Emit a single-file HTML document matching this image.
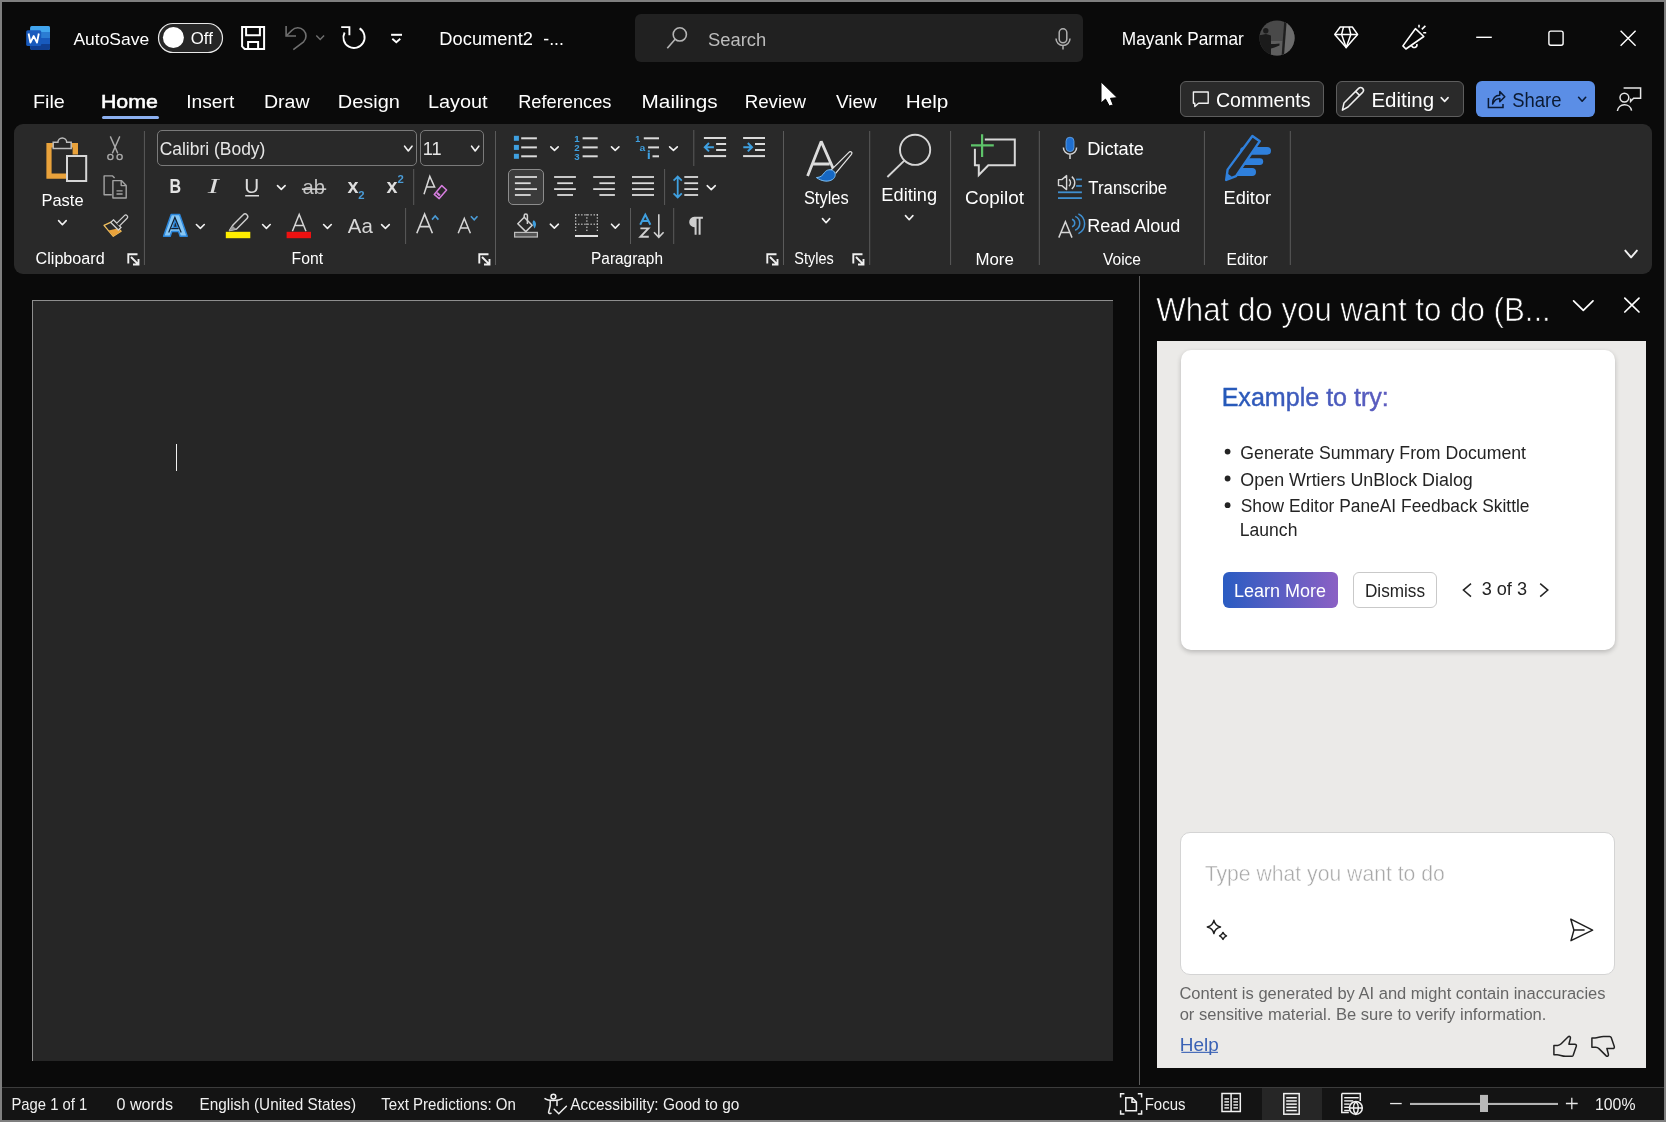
<!DOCTYPE html>
<html><head><meta charset="utf-8">
<style>
*{margin:0;padding:0;box-sizing:border-box}
html,body{width:1666px;height:1122px;overflow:hidden;background:#7f7f7f}
body{position:relative;font-family:"Liberation Sans",sans-serif}
.a{position:absolute}
#ov{position:absolute;left:0;top:0;width:1666px;height:1122px;font-family:"Liberation Sans",sans-serif;will-change:transform}
</style></head><body>
<div class="a" style="left:2px;top:2px;width:1662px;height:1118px;background:#0a0a0a"></div>
<!-- search box -->
<div class="a" style="left:635px;top:14px;width:448px;height:48px;background:#212121;border-radius:6px"></div>
<!-- toolbar buttons -->
<div class="a" style="left:1180px;top:81px;width:144px;height:36px;background:#2a2a2a;border:1px solid #5e5e5e;border-radius:6px"></div>
<div class="a" style="left:1336px;top:81px;width:128px;height:36px;background:#2a2a2a;border:1px solid #5e5e5e;border-radius:6px"></div>
<div class="a" style="left:1476px;top:81px;width:119px;height:36px;background:#5b8ee6;border-radius:6px"></div>
<!-- ribbon panel -->
<div class="a" style="left:14px;top:124px;width:1638px;height:150px;background:#292929;border-radius:9px"></div>
<!-- font combos -->
<div class="a" style="left:157px;top:130px;width:260px;height:36px;background:#292929;border:1px solid #7a7a7a;border-radius:5px"></div>
<div class="a" style="left:420px;top:130px;width:64px;height:36px;background:#292929;border:1px solid #7a7a7a;border-radius:5px"></div>
<!-- align left selected -->
<div class="a" style="left:508px;top:169px;width:36px;height:36px;background:#3b3b3b;border:1px solid #8c8c8c;border-radius:5px"></div>
<!-- page -->
<div class="a" style="left:32px;top:300px;width:1081px;height:761px;background:#262626;border-top:1px solid #8e8e8e;border-left:1px solid #8e8e8e"></div>
<div class="a" style="left:176px;top:444px;width:1px;height:27px;background:#f0f0f0"></div>
<!-- pane separator -->
<div class="a" style="left:1139px;top:276px;width:1px;height:809px;background:#5c5c5c"></div>
<!-- pane light area -->
<div class="a" style="left:1157px;top:341px;width:489px;height:727px;background:#ebeae8"></div>
<!-- card -->
<div class="a" style="left:1181px;top:350px;width:434px;height:300px;background:#fff;border-radius:10px;box-shadow:0 2px 5px rgba(0,0,0,.22)"></div>
<div class="a" style="left:1223px;top:572px;width:115px;height:36px;background:linear-gradient(90deg,#2a5cc2,#8b60c4);border-radius:6px"></div>
<div class="a" style="left:1353px;top:572px;width:84px;height:36px;background:#fff;border:1px solid #c9c9c9;border-radius:6px"></div>
<!-- input box -->
<div class="a" style="left:1180px;top:832px;width:435px;height:143px;background:#fff;border:1px solid #d4d4d4;border-radius:10px"></div>
<!-- status bar -->
<div class="a" style="left:2px;top:1087px;width:1662px;height:1px;background:#3c3c3c"></div>
<div class="a" style="left:2px;top:1088px;width:1662px;height:32px;background:#141414"></div>
<div class="a" style="left:1262px;top:1088px;width:60px;height:32px;background:#262626"></div>
<svg id="ov" width="1666" height="1122" viewBox="0 0 1666 1122">
<defs><linearGradient id="exg" gradientUnits="userSpaceOnUse" x1="1223" y1="0" x2="1387" y2="0"><stop offset="0" stop-color="#2459b9"/><stop offset="1" stop-color="#5d5cbf"/></linearGradient></defs>
<!-- word logo -->
<rect x="30.2" y="26" width="19.8" height="24" rx="2" fill="#2b7cd3"/>
<path d="M32.2,26 H48 a2,2 0 0 1 2,2 V32 H30.2 V28 a2,2 0 0 1 2,-2z" fill="#41a5ee"/>
<rect x="30.2" y="38" width="19.8" height="6" fill="#185abd"/>
<path d="M30.2,44 H50 V48 a2,2 0 0 1 -2,2 H32.2 a2,2 0 0 1 -2,-2z" fill="#103f91"/>
<rect x="26.2" y="30.2" width="15" height="15.8" rx="1.5" fill="#185abd"/>
<path d="M28.6,33.5 L30.4,42.6 L33.7,36 L37,42.6 L38.8,33.5" fill="none" stroke="#fff" stroke-width="1.8" stroke-linejoin="round"/>
<!-- toggle -->
<rect x="158.5" y="23.5" width="64" height="29" rx="14.5" fill="#262626" stroke="#e8e8e8" stroke-width="1.2"/>
<circle cx="173.4" cy="37.5" r="10.5" fill="#fff"/>
<!-- save -->
<path d="M242.1,27 H264.1 V48.9 H244.6 L242.1,46.4Z" fill="none" stroke="#fff" stroke-width="2"/>
<path d="M246.1,27 V35.2 H259.9 V27" fill="none" stroke="#fff" stroke-width="2"/>
<path d="M248.1,48.9 V42 H258.1 V48.9" fill="none" stroke="#fff" stroke-width="2"/>
<!-- undo -->
<g fill="none" stroke="#707070" stroke-width="1.6">
<path d="M286.1,26 V36 H296"/>
<path d="M286.6,35.5 L292,30.2 A8.2,8.2 0 0 1 303.6,41.8 L293.3,49.6"/>
<path d="M316.3,35.5 L320.2,39.4 L324.1,35.5" stroke-width="1.4"/>
</g>
<!-- redo -->
<g fill="none" stroke="#fff" stroke-width="1.9">
<path d="M359.6,28.4 A10.6,10.6 0 1 1 344.6,32.5"/>
<path d="M341.2,27.1 H349.4 V35.2"/>
</g>
<!-- customize -->
<path d="M391.1,34.8 H402" stroke="#fff" stroke-width="2"/>
<path d="M392.3,38.8 L396.3,42.3 L400.3,38.8" fill="none" stroke="#fff" stroke-width="1.8"/>
<!-- search icon -->
<g fill="none" stroke="#b5b5b5" stroke-width="1.6">
<circle cx="679.8" cy="34.4" r="6.6"/>
<path d="M675.1,39.2 L667.3,48.3"/>
</g>
<!-- mic -->
<g fill="none" stroke="#b0b0b0" stroke-width="1.5">
<rect x="1059.2" y="28.8" width="7.6" height="14" rx="3.8"/>
<path d="M1056,38.5 a7,7 0 0 0 14,0 M1063,45.5 V49.5"/>
</g>
<!-- avatar -->
<defs><clipPath id="av"><circle cx="1277" cy="38" r="17.6"/></clipPath></defs>
<g clip-path="url(#av)">
<rect x="1258" y="20" width="38" height="37" fill="#494949"/>
<path d="M1285.5,20 L1296,20 L1296,57 L1282.5,57Z" fill="#6b6b6b"/>
<rect x="1271" y="41" width="11.5" height="16" fill="#5e5e5e"/>
<path d="M1284.2,22 L1286.6,22 L1283.9,57 L1281.5,57Z" fill="#1f1f1f"/>
<path d="M1261,35 L1266,34 L1271,35.5 L1271,44 L1275,44 L1279.5,43.4 L1279.5,45.6 L1274.5,47.5 L1271,48.4 L1271,57 L1259,57 L1259,35Z" fill="#1b1b1b"/>
<circle cx="1265.8" cy="30.8" r="2.7" fill="#1b1b1b"/>
</g>
<!-- diamond -->
<g fill="none" stroke="#fff" stroke-width="1.5" stroke-linejoin="round">
<path d="M1340.2,27 H1352.3 L1357.6,34.4 L1346.2,47.6 L1334.8,34.4Z"/>
<path d="M1334.8,34.4 H1357.6 M1343.5,27 L1341.6,34.4 L1346.2,47.6 L1350.8,34.4 L1349,27"/>
</g>
<!-- megaphone -->
<g fill="none" stroke="#fff" stroke-width="1.6" stroke-linejoin="round">
<path d="M1402.9,45.9 L1415.4,28.7 L1423.8,36.5 L1405.9,49Z"/>
<path d="M1411.6,45.6 a2.7,2.7 0 0 0 5.2,-1.6"/>
<path d="M1419,24.8 V27.4 M1421.8,29.4 L1425.4,25.9 M1423.2,32.8 H1426.2"/>
</g>
<!-- window controls -->
<path d="M1476.2,37.3 H1491.8" stroke="#fff" stroke-width="1.4"/>
<rect x="1548.9" y="31.1" width="14.2" height="14.2" rx="2" fill="none" stroke="#fff" stroke-width="1.4"/>
<path d="M1620.6,30.7 L1635.6,45.7 M1635.6,30.7 L1620.6,45.7" stroke="#fff" stroke-width="1.4"/>
<!-- home underline -->
<rect x="102" y="116" width="57" height="3" rx="1.5" fill="#8cb0f0"/>

<rect x="143.90" y="131" width="1" height="134" fill="#5a5a5a"/>
<rect x="495.00" y="131" width="1" height="134" fill="#5a5a5a"/>
<rect x="783.00" y="131" width="1" height="134" fill="#5a5a5a"/>
<rect x="869.20" y="131" width="1" height="134" fill="#5a5a5a"/>
<rect x="950.10" y="131" width="1" height="134" fill="#5a5a5a"/>
<rect x="1038.80" y="131" width="1" height="134" fill="#5a5a5a"/>
<rect x="1203.90" y="131" width="1" height="134" fill="#5a5a5a"/>
<rect x="1289.80" y="131" width="1" height="134" fill="#5a5a5a"/>
<rect x="413.20" y="169" width="1" height="36" fill="#5a5a5a"/>
<rect x="405.10" y="208" width="1" height="36" fill="#5a5a5a"/>
<rect x="693.30" y="130" width="1" height="36" fill="#5a5a5a"/>
<rect x="664.10" y="169" width="1" height="36" fill="#5a5a5a"/>
<rect x="630.00" y="208" width="1" height="36" fill="#5a5a5a"/>
<rect x="673.20" y="208" width="1" height="36" fill="#5a5a5a"/>
<path d="M46.4,143 H78 V154.5 H72.6 V147.5 H51.6 V173.6 H66 V178.8 H46.4Z" fill="#e9a23b"/>
<path d="M53.2,148.4 V142.3 H57.9 A4.4,4.4 0 0 1 66.7,142.3 H71.2 V148.4Z" fill="#292929" stroke="#bdbdbd" stroke-width="1.5"/>
<rect x="67" y="156" width="19.2" height="25" fill="#292929" stroke="#d6d6d6" stroke-width="2"/>
<path d="M58.60,220.60 L62.40,224.70 L66.20,220.60" fill="none" stroke="#f2f2f2" stroke-width="1.6" stroke-linecap="round" stroke-linejoin="round"/>
<g fill="none" stroke="#a9a9a9" stroke-width="1.4"><path d="M110.3,136.4 L117.8,153.4 M119.8,136.4 L112.3,153.4"/><circle cx="110.4" cy="157" r="2.6"/><circle cx="119.6" cy="157" r="2.6"/></g>
<g fill="none" stroke="#a3a3a3" stroke-width="1.4" stroke-linejoin="round"><path d="M111.8,194.8 H104.1 V175.9 H112.6 L114.6,177.9"/><path d="M112.9,180.6 H121.4 L126.2,185.4 V198 H112.9Z"/><path d="M121.2,180.8 V185.6 H126"/><path d="M116.5,190.8 H122.6 M116.5,194 H122.6" stroke-width="1.3"/></g>
<path d="M104,225.4 L111.6,221.9 L121.1,231.3 L113.3,236.3Z" fill="none" stroke="#f0c060" stroke-width="1.3" stroke-linejoin="round"/>
<path d="M108.5,230.5 L116.5,228.7 L121.1,231.3 L113.3,236.3Z" fill="#e9a23b"/>
<path d="M113.4,219.8 L121,227.4 L118.3,230 L110.8,222.4Z" fill="#292929" stroke="#d0d0d0" stroke-width="1.3"/>
<path d="M116.6,223.4 L124.4,215.6 A1.9,1.9 0 0 1 127.1,218.3 L119.3,226.1" fill="#292929" stroke="#d0d0d0" stroke-width="1.3"/>
<path d="M404.60,146.20 L408.30,150.90 L412.00,146.20" fill="none" stroke="#f2f2f2" stroke-width="1.6" stroke-linecap="round" stroke-linejoin="round"/>
<path d="M471.60,146.20 L475.20,150.90 L478.80,146.20" fill="none" stroke="#f2f2f2" stroke-width="1.6" stroke-linecap="round" stroke-linejoin="round"/>
<text x="169.4" y="192.9" font-size="20.5" font-weight="bold" fill="#e3e3e3" textLength="11.6" lengthAdjust="spacingAndGlyphs">B</text>
<text x="207.8" y="192.9" font-family="Liberation Serif" font-style="italic" font-size="20.5" fill="#dcdcdc" textLength="11" lengthAdjust="spacingAndGlyphs">I</text>
<text x="244.2" y="192.9" font-size="20.5" fill="#dcdcdc" textLength="15" lengthAdjust="spacingAndGlyphs">U</text>
<rect x="245.2" y="195" width="13.8" height="1.5" fill="#dcdcdc"/>
<path d="M277.50,185.60 L281.30,189.40 L285.10,185.60" fill="none" stroke="#f2f2f2" stroke-width="1.6" stroke-linecap="round" stroke-linejoin="round"/>
<text x="302.6" y="194.4" font-size="21" fill="#c4c4c4" textLength="22.4" lengthAdjust="spacingAndGlyphs">ab</text>
<rect x="301.9" y="188.4" width="24.3" height="1.5" fill="#d6d6d6"/>
<text x="347.4" y="193.4" font-size="20.5" font-weight="bold" fill="#dedede" textLength="11" lengthAdjust="spacingAndGlyphs">x</text>
<text x="358.3" y="199.2" font-size="10.5" font-weight="bold" fill="#4a9bd6" textLength="6.3" lengthAdjust="spacingAndGlyphs">2</text>
<text x="386.6" y="193.4" font-size="20.5" font-weight="bold" fill="#dedede" textLength="11" lengthAdjust="spacingAndGlyphs">x</text>
<text x="397.4" y="182.8" font-size="10.5" font-weight="bold" fill="#4a9bd6" textLength="6.3" lengthAdjust="spacingAndGlyphs">2</text>
<path d="M424,194.2 L429.8,176.4 L434.6,187 H426.6" fill="none" stroke="#d8d8d8" stroke-width="1.5" stroke-linejoin="miter"/>
<path d="M434.2,194.4 L441.8,185.6 L446.6,190 L439.2,198.6Z" fill="#292929" stroke="#d77ee0" stroke-width="1.5" stroke-linejoin="round"/>
<path d="M436.2,193.6 L437.6,192 L440.6,194.8 L439.2,196.4Z" fill="#d77ee0"/>
<path d="M163.6,236.2 L171.2,214.4 H179.6 L187.2,236.2 H180.2 L178.6,231.6 H171.8 L170.2,236.2Z M173,227.6 L175.4,219.6 L177.6,227.6Z" fill="#86c6f4" fill-rule="evenodd" stroke="#2b86da" stroke-width="1.5" stroke-linejoin="round"/>
<path d="M168.7,232.4 L174.9,217.4 L181.2,232.4 M171.2,228.6 H178.6" fill="none" stroke="#0e2035" stroke-width="1.2"/>
<path d="M196.40,224.50 L200.35,228.40 L204.30,224.50" fill="none" stroke="#f2f2f2" stroke-width="1.6" stroke-linecap="round" stroke-linejoin="round"/>
<path d="M229.5,230.5 L233,225 L243.2,214.8 A2.5,2.5 0 0 1 247,218.4 L236.6,229 Z" fill="#292929" stroke="#cfcfcf" stroke-width="1.4" stroke-linejoin="round"/>
<path d="M228.8,231 L232.6,225.8 L236.2,229.2 Z" fill="#9a9a9a"/>
<rect x="225.8" y="231.8" width="24.5" height="6.4" fill="#ffee00"/>
<path d="M262.60,224.50 L266.40,228.40 L270.20,224.50" fill="none" stroke="#f2f2f2" stroke-width="1.6" stroke-linecap="round" stroke-linejoin="round"/>
<path d="M292.4,231.2 L299.2,214.4 L306,231.2 M294.6,225.4 H303.8" fill="none" stroke="#d6d6d6" stroke-width="1.5"/>
<rect x="286.6" y="231.8" width="24.4" height="6.4" fill="#ee1111"/>
<path d="M323.60,224.50 L327.45,228.40 L331.30,224.50" fill="none" stroke="#f2f2f2" stroke-width="1.6" stroke-linecap="round" stroke-linejoin="round"/>
<text x="347.8" y="233.3" font-size="20.5" fill="#d6d6d6" textLength="25" lengthAdjust="spacingAndGlyphs">Aa</text>
<path d="M381.60,224.60 L385.45,228.30 L389.30,224.60" fill="none" stroke="#f2f2f2" stroke-width="1.6" stroke-linecap="round" stroke-linejoin="round"/>
<path d="M416.8,233.3 L424.6,214.2 L432.4,233.3 M419.6,226.6 H429.6" fill="none" stroke="#d6d6d6" stroke-width="1.6"/>
<path d="M432,219.6 L435.2,216 L438.4,219.6" fill="none" stroke="#4a9bd6" stroke-width="1.6"/>
<path d="M458.2,233.3 L464.3,218.5 L470.4,233.3 M460.4,228 H468.2" fill="none" stroke="#d6d6d6" stroke-width="1.5"/>
<path d="M470.9,216.2 L474.2,219.8 L477.5,216.2" fill="none" stroke="#4a9bd6" stroke-width="1.6"/>
<path d="M128.3,263.5 V254.3 H137.5" fill="none" stroke="#f0f0f0" stroke-width="1.9"/>
<path d="M131.0,257.0 L138.3,264.3 M133.0,264.5 H138.5 V259.0" fill="none" stroke="#f0f0f0" stroke-width="1.9"/>
<path d="M479.3,263.5 V254.3 H488.5" fill="none" stroke="#f0f0f0" stroke-width="1.9"/>
<path d="M482.0,257.0 L489.3,264.3 M484.0,264.5 H489.5 V259.0" fill="none" stroke="#f0f0f0" stroke-width="1.9"/>
<path d="M767.3,263.5 V254.3 H776.5" fill="none" stroke="#f0f0f0" stroke-width="1.9"/>
<path d="M770.0,257.0 L777.3,264.3 M772.0,264.5 H777.5 V259.0" fill="none" stroke="#f0f0f0" stroke-width="1.9"/>
<path d="M853.3,263.5 V254.3 H862.5" fill="none" stroke="#f0f0f0" stroke-width="1.9"/>
<path d="M856.0,257.0 L863.3,264.3 M858.0,264.5 H863.5 V259.0" fill="none" stroke="#f0f0f0" stroke-width="1.9"/>
<rect x="513.9" y="135.8" width="5" height="5" fill="#3fa0e0"/>
<rect x="521.2" y="137.3" width="15.7" height="2" fill="#dadada"/>
<rect x="513.9" y="144.9" width="5" height="5" fill="#3fa0e0"/>
<rect x="521.2" y="146.4" width="15.7" height="2" fill="#dadada"/>
<rect x="513.9" y="153.8" width="5" height="5" fill="#3fa0e0"/>
<rect x="521.2" y="155.3" width="15.7" height="2" fill="#dadada"/>
<path d="M550.80,146.80 L554.50,150.30 L558.20,146.80" fill="none" stroke="#f2f2f2" stroke-width="1.6" stroke-linecap="round" stroke-linejoin="round"/>
<text x="574.3" y="141.7" font-size="9.2" font-weight="bold" fill="#3fa0e0" textLength="5.4" lengthAdjust="spacingAndGlyphs">1</text>
<rect x="582.6" y="137.3" width="15.1" height="2" fill="#dadada"/>
<text x="574.3" y="150.8" font-size="9.2" font-weight="bold" fill="#3fa0e0" textLength="5.4" lengthAdjust="spacingAndGlyphs">2</text>
<rect x="582.6" y="146.4" width="15.1" height="2" fill="#dadada"/>
<text x="574.3" y="159.7" font-size="9.2" font-weight="bold" fill="#3fa0e0" textLength="5.4" lengthAdjust="spacingAndGlyphs">3</text>
<rect x="582.6" y="155.3" width="15.1" height="2" fill="#dadada"/>
<path d="M611.50,146.80 L615.20,150.30 L618.90,146.80" fill="none" stroke="#f2f2f2" stroke-width="1.6" stroke-linecap="round" stroke-linejoin="round"/>
<text x="635.3" y="141.7" font-size="9.2" font-weight="bold" fill="#3fa0e0" textLength="5" lengthAdjust="spacingAndGlyphs">1</text>
<rect x="643.8" y="137.3" width="15.2" height="2" fill="#dadada"/>
<text x="639.6" y="150.8" font-size="9.2" font-weight="bold" fill="#3fa0e0" textLength="5.8" lengthAdjust="spacingAndGlyphs">a</text>
<rect x="648.1" y="146.4" width="10.9" height="2" fill="#dadada"/>
<rect x="647.8" y="152.6" width="2" height="6.4" fill="#3fa0e0"/><rect x="647.8" y="150.3" width="2" height="1.6" fill="#3fa0e0"/>
<rect x="652.5" y="155.3" width="6.5" height="2" fill="#dadada"/>
<path d="M669.60,146.80 L673.45,150.30 L677.30,146.80" fill="none" stroke="#f2f2f2" stroke-width="1.6" stroke-linecap="round" stroke-linejoin="round"/>
<rect x="703.9" y="137" width="22.2" height="2" fill="#dadada"/><rect x="703.9" y="155.1" width="22.2" height="2" fill="#dadada"/>
<rect x="716.1" y="143" width="10" height="2" fill="#dadada"/><rect x="716.1" y="149" width="10" height="2" fill="#dadada"/>
<rect x="743.1" y="137" width="21.9" height="2" fill="#dadada"/><rect x="743.1" y="155.1" width="21.9" height="2" fill="#dadada"/>
<rect x="755.0" y="143" width="10" height="2" fill="#dadada"/><rect x="755.0" y="149" width="10" height="2" fill="#dadada"/>
<path d="M704.8,147.2 H713.9 M709,143 L704.8,147.2 L709,151.4" fill="none" stroke="#3fa0e0" stroke-width="2"/>
<path d="M743.3,147.2 H752 M747.8,143 L752,147.2 L747.8,151.4" fill="none" stroke="#3fa0e0" stroke-width="2"/>
<rect x="514.9" y="176.1" width="22.1" height="1.8" fill="#dadada"/>
<rect x="514.9" y="182.3" width="15.8" height="1.8" fill="#dadada"/>
<rect x="514.9" y="188.2" width="22.1" height="1.8" fill="#dadada"/>
<rect x="514.9" y="194.1" width="15.8" height="1.8" fill="#dadada"/>
<rect x="554.1" y="176.1" width="21.8" height="1.8" fill="#dadada"/>
<rect x="557.2" y="182.3" width="15.8" height="1.8" fill="#dadada"/>
<rect x="554.1" y="188.2" width="21.8" height="1.8" fill="#dadada"/>
<rect x="557.2" y="194.1" width="15.8" height="1.8" fill="#dadada"/>
<rect x="593.2" y="176.1" width="21.7" height="1.8" fill="#dadada"/>
<rect x="599.4" y="182.3" width="15.5" height="1.8" fill="#dadada"/>
<rect x="593.2" y="188.2" width="21.7" height="1.8" fill="#dadada"/>
<rect x="599.4" y="194.1" width="15.5" height="1.8" fill="#dadada"/>
<rect x="632" y="176.1" width="22.0" height="1.8" fill="#dadada"/>
<rect x="632" y="182.3" width="22.0" height="1.8" fill="#dadada"/>
<rect x="632" y="188.2" width="22.0" height="1.8" fill="#dadada"/>
<rect x="632" y="194.1" width="22.0" height="1.8" fill="#dadada"/>
<rect x="684.3" y="176.1" width="13.8" height="1.8" fill="#dadada"/>
<rect x="684.3" y="182.3" width="13.8" height="1.8" fill="#dadada"/>
<rect x="684.3" y="188.2" width="13.8" height="1.8" fill="#dadada"/>
<rect x="684.3" y="194.1" width="13.8" height="1.8" fill="#dadada"/>
<path d="M677.7,177 V197 M673.6,180.6 L677.7,176.6 L681.8,180.6 M673.6,193.4 L677.7,197.4 L681.8,193.4" fill="none" stroke="#3fa0e0" stroke-width="1.8"/>
<path d="M707.20,185.70 L711.25,189.60 L715.30,185.70" fill="none" stroke="#f2f2f2" stroke-width="1.6" stroke-linecap="round" stroke-linejoin="round"/>
<path d="M517.8,223.8 L524.2,217.2 L532.2,225.2 L525.8,231.6Z" fill="none" stroke="#d0d0d0" stroke-width="1.5" stroke-linejoin="round"/>
<path d="M524.2,217.2 V215.5 A1.6,1.6 0 0 1 527.4,215.5 V224" fill="none" stroke="#d0d0d0" stroke-width="1.5"/>
<path d="M533.8,220.2 C531.8,221.4 532.6,224.4 534.6,228.6 C536.6,225 536.4,222 533.8,220.2Z" fill="#3fa0e0"/>
<rect x="514.6" y="232.4" width="22.8" height="4.6" fill="#555" stroke="#bdbdbd" stroke-width="1.2"/>
<path d="M550.30,224.20 L554.35,228.10 L558.40,224.20" fill="none" stroke="#f2f2f2" stroke-width="1.6" stroke-linecap="round" stroke-linejoin="round"/>
<g fill="#c8c8c8">
<rect x="575.0" y="214.2" width="1.3" height="1.3"/><rect x="575.0" y="223.6" width="1.3" height="1.3"/>
<rect x="578.1" y="214.2" width="1.3" height="1.3"/><rect x="578.1" y="223.6" width="1.3" height="1.3"/>
<rect x="581.2" y="214.2" width="1.3" height="1.3"/><rect x="581.2" y="223.6" width="1.3" height="1.3"/>
<rect x="584.3" y="214.2" width="1.3" height="1.3"/><rect x="584.3" y="223.6" width="1.3" height="1.3"/>
<rect x="587.4" y="214.2" width="1.3" height="1.3"/><rect x="587.4" y="223.6" width="1.3" height="1.3"/>
<rect x="590.5" y="214.2" width="1.3" height="1.3"/><rect x="590.5" y="223.6" width="1.3" height="1.3"/>
<rect x="593.6" y="214.2" width="1.3" height="1.3"/><rect x="593.6" y="223.6" width="1.3" height="1.3"/>
<rect x="596.7" y="214.2" width="1.3" height="1.3"/><rect x="596.7" y="223.6" width="1.3" height="1.3"/>
<rect x="575" y="214.2" width="1.3" height="1.3"/><rect x="586.2" y="214.2" width="1.3" height="1.3"/><rect x="596.7" y="214.2" width="1.3" height="1.3"/>
<rect x="575" y="217.3" width="1.3" height="1.3"/><rect x="586.2" y="217.3" width="1.3" height="1.3"/><rect x="596.7" y="217.3" width="1.3" height="1.3"/>
<rect x="575" y="220.4" width="1.3" height="1.3"/><rect x="586.2" y="220.4" width="1.3" height="1.3"/><rect x="596.7" y="220.4" width="1.3" height="1.3"/>
<rect x="575" y="223.5" width="1.3" height="1.3"/><rect x="586.2" y="223.5" width="1.3" height="1.3"/><rect x="596.7" y="223.5" width="1.3" height="1.3"/>
<rect x="575" y="226.6" width="1.3" height="1.3"/><rect x="586.2" y="226.6" width="1.3" height="1.3"/><rect x="596.7" y="226.6" width="1.3" height="1.3"/>
<rect x="575" y="229.7" width="1.3" height="1.3"/><rect x="586.2" y="229.7" width="1.3" height="1.3"/><rect x="596.7" y="229.7" width="1.3" height="1.3"/>
</g>
<rect x="575" y="235" width="23" height="2" fill="#e0e0e0"/>
<path d="M611.50,224.20 L615.30,228.10 L619.10,224.20" fill="none" stroke="#f2f2f2" stroke-width="1.6" stroke-linecap="round" stroke-linejoin="round"/>
<path d="M640.2,224.7 L645.3,214.6 L650.4,224.7 M642,221 H648.6" fill="none" stroke="#3fa0e0" stroke-width="2"/>
<path d="M640.4,228.4 H648.4 L640.4,236.8 H648.8" fill="none" stroke="#cfcfcf" stroke-width="1.9"/>
<path d="M658.8,214.2 V237.2 M654,232.2 L658.8,237.4 L663.6,232.2" fill="none" stroke="#cfcfcf" stroke-width="1.6"/>
<path d="M694.2,216.8 H702.9 V218.8 H700.6 V234.7 H698.6 V218.8 H696.6 V234.7 H694.6 V227.2 A5.2,5.2 0 0 1 694.2,216.8Z" fill="#cfcfcf"/>
<path d="M807.6,176 L821.2,141.4 L833.2,168.6 M811.4,164 H829.6" fill="none" stroke="#dcdcdc" stroke-width="2.8" stroke-linejoin="bevel"/>
<path d="M830.8,170.4 L848.4,152.8 C850.6,150.6 853,152.2 851.4,154.4 L835.6,173.4" fill="#292929" stroke="#e6e6e6" stroke-width="1.2"/>
<path d="M816.4,177.6 C820.6,177.4 822.8,175.2 824.4,172.6 C826.4,169.6 830.8,168.8 833.6,171 C836.2,173.4 835.6,177.4 832.6,179.4 C828.4,182.2 822,181.6 816.4,177.6Z" fill="#1668c4" stroke="#7cc0f5" stroke-width="1"/>
<path d="M822.50,218.60 L826.10,222.70 L829.70,218.60" fill="none" stroke="#f2f2f2" stroke-width="1.6" stroke-linecap="round" stroke-linejoin="round"/>
<g fill="none" stroke="#d6d6d6" stroke-width="1.9"><circle cx="915.1" cy="149.8" r="15.1"/><path d="M904.3,160.6 L887.4,177"/></g>
<path d="M905.50,215.60 L909.20,219.70 L912.90,215.60" fill="none" stroke="#f2f2f2" stroke-width="1.6" stroke-linecap="round" stroke-linejoin="round"/>
<path d="M984.8,139.6 H1014.8 V165.2 H988.3 L978.8,175 V165.2 H974.9 V148.8" fill="none" stroke="#d8d8d8" stroke-width="2"/>
<path d="M971,145.3 H993.8 M982.1,134.2 V157" fill="none" stroke="#5ec46a" stroke-width="2.2"/>
<rect x="1066" y="137.2" width="8" height="14.4" rx="4" fill="#1f6fd0" stroke="#6aa8ea" stroke-width="0.8"/>
<path d="M1063.4,147.6 A6.6,6.6 0 0 0 1076.6,147.6 M1070,154.2 V158.9" fill="none" stroke="#d6d6d6" stroke-width="1.5"/>
<path d="M1058.5,179.6 H1061.8 L1066.6,175.6 V189.6 L1061.8,185.6 H1058.5Z" fill="none" stroke="#d6d6d6" stroke-width="1.4" stroke-linejoin="round"/>
<path d="M1069,179.4 A4.5,4.5 0 0 1 1069,186.2 M1071.8,176.6 A8,8 0 0 1 1071.8,189" fill="none" stroke="#d6d6d6" stroke-width="1.4"/>
<rect x="1076.1" y="178.6" width="5.8" height="1.7" fill="#3f8fd0"/><rect x="1076.1" y="185.1" width="5.8" height="1.7" fill="#3f8fd0"/>
<rect x="1058" y="191.4" width="23.9" height="1.8" fill="#3f8fd0"/><rect x="1058" y="197.2" width="23.9" height="1.8" fill="#3f8fd0"/>
<path d="M1058.8,237.6 L1065.4,221.8 L1072,237.6 M1061,232.4 H1069.8" fill="none" stroke="#d6d6d6" stroke-width="1.5"/>
<path d="M1072,219.2 A4,4 0 0 1 1072,226.8 M1075.2,216.4 A7.5,7.5 0 0 1 1075.2,230.2 M1078.4,213.8 A11,11 0 0 1 1078.4,233.6" fill="none" stroke="#3f8fd0" stroke-width="1.5"/>
<rect x="1240" y="147" width="31" height="7.7" rx="3.85" fill="#2f80dc"/>
<rect x="1236" y="158.2" width="27.2" height="6.7" rx="3.35" fill="#2f80dc"/>
<rect x="1231" y="168.1" width="25" height="7.8" rx="3.9" fill="#2f80dc"/>
<path d="M1252.4,136 L1259.8,141.2 L1236,176.2 L1226.2,180 L1227.6,169.6Z" fill="#292929" stroke="#2f80dc" stroke-width="2.4" stroke-linejoin="round"/>
<path d="M1226.2,180 L1227.4,173.4 L1231.8,176.6Z" fill="#2f80dc"/>
<path d="M1625.30,250.60 L1631.10,257.40 L1636.90,250.60" fill="none" stroke="#f2f2f2" stroke-width="1.9" stroke-linecap="round" stroke-linejoin="round"/>
<path d="M1193.4,92 H1208.2 V103.2 H1198.6 L1194.8,106.6 V103.2 H1193.4Z" fill="none" stroke="#f0f0f0" stroke-width="1.4" stroke-linejoin="round"/>
<path d="M1342.4,110.2 L1344,103 L1358.6,88.4 A2.6,2.6 0 0 1 1362.6,92.4 L1348,107Z M1355.6,91.4 L1359.6,95.4" fill="none" stroke="#f0f0f0" stroke-width="1.5" stroke-linejoin="round"/>
<path d="M1441.20,97.60 L1444.65,101.40 L1448.10,97.60" fill="none" stroke="#f2f2f2" stroke-width="1.6" stroke-linecap="round" stroke-linejoin="round"/>
<path d="M1492.6,104 C1492.6,97.6 1496,95.2 1499.8,95.2 V91.6 L1504.8,96.7 L1499.8,101.8 V98.4 C1497,98.4 1494.2,100.2 1492.6,104Z" fill="none" stroke="#0b1a33" stroke-width="1.5" stroke-linejoin="round"/>
<path d="M1488.4,98 V107.6 H1503 V104" fill="none" stroke="#0b1a33" stroke-width="1.5"/>
<path d="M1578.60,97.30 L1582.15,101.20 L1585.70,97.30" fill="none" stroke="#0b1a33" stroke-width="1.6" stroke-linecap="round" stroke-linejoin="round"/>
<g fill="none" stroke="#e6e6e6" stroke-width="1.5"><circle cx="1624.4" cy="97.6" r="4.4"/><path d="M1617.4,111 A7.2,7.2 0 0 1 1631.6,110.6"/><path d="M1623.6,88 H1640.6 V98.2 H1633.6 L1630.6,101.4 V98.6"/></g>
<path d="M1101,81.8 L1117.3,97.7 L1110.5,98.3 L1113.2,104.9 L1109.3,106 L1105.5,99.1 L1101,103.1Z" fill="#fff" stroke="#000" stroke-width="1" stroke-linejoin="round"/>
<path d="M1573.6,300.8 L1583.3,310.4 L1593,300.8" fill="none" stroke="#fff" stroke-width="1.7" stroke-linecap="round" stroke-linejoin="round"/>
<path d="M1624.8,298.1 L1639,312 M1639,298.1 L1624.8,312" stroke="#fff" stroke-width="1.7" stroke-linecap="round"/>
<circle cx="1227.6" cy="451.6" r="2.9" fill="#242424"/>
<circle cx="1227.6" cy="478.5" r="2.9" fill="#242424"/>
<circle cx="1227.6" cy="505.2" r="2.9" fill="#242424"/>
<path d="M1471,583.6 L1463.4,590.1 L1471,596.6" fill="none" stroke="#242424" stroke-width="1.5"/>
<path d="M1540.2,583.6 L1547.8,590.1 L1540.2,596.6" fill="none" stroke="#242424" stroke-width="1.5"/>
<path d="M1213.9,920.3 Q1215.0880000000002,925.712 1220.5,926.9 Q1215.0880000000002,928.088 1213.9,933.5 Q1212.712,928.088 1207.3000000000002,926.9 Q1212.712,925.712 1213.9,920.3Z" fill="none" stroke="#1e1e1e" stroke-width="1.5" stroke-linejoin="round"/>
<path d="M1223,932.4 Q1224.05,934.85 1226.5,935.9 Q1224.05,936.9499999999999 1223,939.4 Q1221.95,936.9499999999999 1219.5,935.9 Q1221.95,934.85 1223,932.4Z" fill="none" stroke="#1e1e1e" stroke-width="1.4" stroke-linejoin="round"/>
<path d="M1570.8,919.2 L1592.6,930.1 L1571,940.6 L1573.9,930.1Z M1573.9,930.1 H1584.6" fill="none" stroke="#1e1e1e" stroke-width="1.5" stroke-linejoin="round"/>
<path d="M1553.9,1045.4 H1557.6 C1559.2,1045.4 1560.2,1044.8 1561.2,1043.8 L1568.2,1036.8 C1569.4,1035.8 1570.8,1036.8 1570.4,1038.4 L1568.9,1044.2 H1574.8 C1576,1044.2 1576.6,1045 1576.3,1046.2 L1573.2,1055.2 C1572.9,1056 1572.4,1056.3 1571.6,1056.3 H1565.5 C1562,1056.3 1559.8,1054.8 1557,1054.8 H1553.9Z" fill="none" stroke="#222" stroke-width="1.5" stroke-linejoin="round"/>
<path d="M1591.9,1047.3 H1595.6 C1597.2,1047.3 1598.2,1047.9 1599.2,1048.9 L1606.2,1055.9 C1607.4,1056.9 1608.8,1055.9 1608.4,1054.3 L1606.9,1048.5 H1612.8 C1614,1048.5 1614.6,1047.7 1614.3,1046.5 L1611.2,1037.5 C1610.9,1036.7 1610.4,1036.4 1609.6,1036.4 H1603.5 C1600,1036.4 1597.8,1037.9 1595,1037.9 H1591.9Z" fill="none" stroke="#222" stroke-width="1.5" stroke-linejoin="round"/>
<rect x="1181.3" y="1051.8" width="36.7" height="1.1" fill="#3a62b5"/>
<g fill="none" stroke="#f0f0f0" stroke-width="1.5" stroke-linecap="round"><circle cx="553.4" cy="1096.6" r="2.4"/><path d="M545,1098.6 C548,1101 558.5,1101 562,1098.6"/><path d="M550.2,1101 C550.8,1106 549.4,1109.6 548.6,1112 C548.2,1113.2 549.6,1113.8 551,1113.2"/><path d="M557,1101 V1105.6"/><path d="M554.2,1109.2 L558.8,1113.8 L566.4,1106.2"/></g>
<g fill="none" stroke="#f2f2f2" stroke-width="1.5">
<path d="M1120.6,1097.6 V1093.8 H1124.4 M1137.8,1093.8 H1141.6 V1097.6 M1141.6,1110.2 V1114 H1137.8 M1124.4,1114 H1120.6 V1110.2"/>
<path d="M1125.8,1097.8 H1132.2 L1136.4,1102 V1110.8 H1125.8Z M1132,1098 V1102.2 H1136.2"/>
<path d="M1222,1093.6 H1231.1 V1111.4 H1222Z M1231.1,1093.6 H1240.3 V1111.4 H1231.1"/>
<rect x="1283.8" y="1093.6" width="15.4" height="20.6"/>
<path d="M1341.8,1093.6 H1360.3 V1101 M1348.8,1112.4 H1341.8 V1093.6"/>
<circle cx="1355.9" cy="1107.9" r="6.4"/><path d="M1349.5,1107.9 H1362.3 M1355.9,1101.5 C1352.6,1105 1352.6,1110.8 1355.9,1114.3 C1359.2,1110.8 1359.2,1105 1355.9,1101.5"/>
</g>
<g fill="#f2f2f2">
<rect x="1224.4" y="1098.2" width="4.6" height="1.4"/><rect x="1233.4" y="1098.2" width="4.6" height="1.4"/>
<rect x="1224.4" y="1101.2" width="4.6" height="1.4"/><rect x="1233.4" y="1101.2" width="4.6" height="1.4"/>
<rect x="1224.4" y="1104.2" width="4.6" height="1.4"/><rect x="1233.4" y="1104.2" width="4.6" height="1.4"/>
<rect x="1224.4" y="1107.2" width="4.6" height="1.4"/><rect x="1233.4" y="1107.2" width="4.6" height="1.4"/>
<rect x="1286.2" y="1097" width="10.6" height="1.5"/>
<rect x="1286.2" y="1100.2" width="10.6" height="1.5"/>
<rect x="1286.2" y="1103.4" width="10.6" height="1.5"/>
<rect x="1286.2" y="1106.6" width="10.6" height="1.5"/>
<rect x="1286.2" y="1109.8" width="10.6" height="1.5"/>
<rect x="1344.2" y="1097" width="14.5" height="1.4"/>
<rect x="1344.2" y="1100.2" width="9" height="1.4"/>
<rect x="1344.2" y="1103.4" width="5.5" height="1.4"/>
<rect x="1344.2" y="1106.6" width="5.5" height="1.4"/>
<rect x="1344.2" y="1109.8" width="5.5" height="1.4"/>
</g>
<rect x="1390.1" y="1102.9" width="11.6" height="1.3" fill="#e8e8e8"/>
<rect x="1410" y="1102.9" width="148" height="2.1" fill="#b3b3b3"/>
<rect x="1480" y="1094.9" width="8" height="17.1" fill="#b8b8b8"/>
<path d="M1565.9,1103.5 H1577.7 M1571.8,1097.8 V1109.2" stroke="#e8e8e8" stroke-width="1.3"/>
<text x="73.40" y="44.60" font-size="17.35" fill="#ffffff" textLength="75.81" lengthAdjust="spacingAndGlyphs">AutoSave</text>
<text x="190.71" y="43.80" font-size="16.78" fill="#ffffff" textLength="22.13" lengthAdjust="spacingAndGlyphs">Off</text>
<text x="439.37" y="44.80" font-size="17.92" fill="#ffffff" textLength="93.57" lengthAdjust="spacingAndGlyphs">Document2</text>
<text x="543.35" y="44.80" font-size="17.92" fill="#ffffff" textLength="20.54" lengthAdjust="spacingAndGlyphs">-...</text>
<text x="707.92" y="45.50" font-size="18.49" fill="#bdbdbd" textLength="58.31" lengthAdjust="spacingAndGlyphs">Search</text>
<text x="1121.85" y="44.80" font-size="18.20" fill="#ffffff" textLength="121.93" lengthAdjust="spacingAndGlyphs">Mayank Parmar</text>
<text x="32.96" y="107.70" font-size="19.06" fill="#ffffff" textLength="31.84" lengthAdjust="spacingAndGlyphs">File</text>
<text x="100.93" y="107.70" font-size="19.06" fill="#ffffff" textLength="56.93" lengthAdjust="spacingAndGlyphs" stroke="#ffffff" stroke-width="0.55">Home</text>
<text x="186.20" y="107.70" font-size="19.06" fill="#ffffff" textLength="48.03" lengthAdjust="spacingAndGlyphs">Insert</text>
<text x="263.97" y="107.70" font-size="19.06" fill="#ffffff" textLength="45.59" lengthAdjust="spacingAndGlyphs">Draw</text>
<text x="337.84" y="107.70" font-size="19.06" fill="#ffffff" textLength="61.97" lengthAdjust="spacingAndGlyphs">Design</text>
<text x="427.95" y="107.70" font-size="19.06" fill="#ffffff" textLength="59.69" lengthAdjust="spacingAndGlyphs">Layout</text>
<text x="518.17" y="107.70" font-size="19.06" fill="#ffffff" textLength="93.30" lengthAdjust="spacingAndGlyphs">References</text>
<text x="641.58" y="107.70" font-size="19.06" fill="#ffffff" textLength="76.07" lengthAdjust="spacingAndGlyphs">Mailings</text>
<text x="744.74" y="107.70" font-size="19.06" fill="#ffffff" textLength="61.23" lengthAdjust="spacingAndGlyphs">Review</text>
<text x="836.00" y="107.70" font-size="19.06" fill="#ffffff" textLength="40.77" lengthAdjust="spacingAndGlyphs">View</text>
<text x="905.68" y="107.70" font-size="19.06" fill="#ffffff" textLength="42.66" lengthAdjust="spacingAndGlyphs">Help</text>
<text x="1215.88" y="107.00" font-size="19.34" fill="#ffffff" textLength="94.73" lengthAdjust="spacingAndGlyphs">Comments</text>
<text x="1371.40" y="107.00" font-size="19.34" fill="#ffffff" textLength="62.65" lengthAdjust="spacingAndGlyphs">Editing</text>
<text x="1512.22" y="106.60" font-size="19.34" fill="#0b1a33" textLength="49.22" lengthAdjust="spacingAndGlyphs">Share</text>
<text x="159.68" y="155.30" font-size="18.49" fill="#e6e6e6" textLength="105.72" lengthAdjust="spacingAndGlyphs">Calibri (Body)</text>
<text x="422.86" y="155.30" font-size="18.49" fill="#e6e6e6" textLength="18.87" lengthAdjust="spacingAndGlyphs">11</text>
<text x="41.41" y="205.60" font-size="17.35" fill="#ffffff" textLength="42.16" lengthAdjust="spacingAndGlyphs">Paste</text>
<text x="35.54" y="264.00" font-size="15.64" fill="#ffffff" textLength="69.16" lengthAdjust="spacingAndGlyphs">Clipboard</text>
<text x="291.57" y="264.10" font-size="15.64" fill="#ffffff" textLength="31.48" lengthAdjust="spacingAndGlyphs">Font</text>
<text x="591.10" y="264.00" font-size="15.64" fill="#ffffff" textLength="71.87" lengthAdjust="spacingAndGlyphs">Paragraph</text>
<text x="803.89" y="204.00" font-size="17.78" fill="#ffffff" textLength="44.83" lengthAdjust="spacingAndGlyphs">Styles</text>
<text x="794.35" y="264.00" font-size="15.64" fill="#ffffff" textLength="39.30" lengthAdjust="spacingAndGlyphs">Styles</text>
<text x="881.38" y="200.70" font-size="17.78" fill="#ffffff" textLength="55.64" lengthAdjust="spacingAndGlyphs">Editing</text>
<text x="965.11" y="204.00" font-size="17.78" fill="#ffffff" textLength="58.82" lengthAdjust="spacingAndGlyphs">Copilot</text>
<text x="975.48" y="265.00" font-size="15.64" fill="#ffffff" textLength="38.40" lengthAdjust="spacingAndGlyphs">More</text>
<text x="1087.17" y="155.00" font-size="18.35" fill="#ffffff" textLength="56.87" lengthAdjust="spacingAndGlyphs">Dictate</text>
<text x="1088.34" y="194.00" font-size="18.35" fill="#ffffff" textLength="78.74" lengthAdjust="spacingAndGlyphs">Transcribe</text>
<text x="1087.21" y="232.40" font-size="18.35" fill="#ffffff" textLength="93.19" lengthAdjust="spacingAndGlyphs">Read Aloud</text>
<text x="1103.00" y="265.00" font-size="15.64" fill="#ffffff" textLength="38.03" lengthAdjust="spacingAndGlyphs">Voice</text>
<text x="1223.58" y="204.00" font-size="17.78" fill="#ffffff" textLength="47.51" lengthAdjust="spacingAndGlyphs">Editor</text>
<text x="1226.57" y="265.00" font-size="15.64" fill="#ffffff" textLength="41.11" lengthAdjust="spacingAndGlyphs">Editor</text>
<text x="1156.30" y="321.00" font-size="33.00" fill="#ffffff" textLength="394.52" lengthAdjust="spacingAndGlyphs" stroke="#0a0a0a" stroke-width="0.7">What do you want to do (B...</text>
<text x="1221.64" y="406.30" font-size="25.32" fill="url(#exg)" textLength="167.22" lengthAdjust="spacingAndGlyphs" stroke="url(#exg)" stroke-width="0.45">Example to try:</text>
<text x="1240.37" y="458.80" font-size="17.64" fill="#242424" textLength="285.57" lengthAdjust="spacingAndGlyphs">Generate Summary From Document</text>
<text x="1240.36" y="485.70" font-size="17.64" fill="#242424" textLength="232.44" lengthAdjust="spacingAndGlyphs">Open Wrtiers UnBlock Dialog</text>
<text x="1240.66" y="512.40" font-size="17.64" fill="#242424" textLength="288.85" lengthAdjust="spacingAndGlyphs">Show Editor PaneAI Feedback Skittle</text>
<text x="1239.83" y="536.40" font-size="17.64" fill="#242424" textLength="57.56" lengthAdjust="spacingAndGlyphs">Launch</text>
<text x="1233.99" y="597.00" font-size="18.49" fill="#ffffff" textLength="92.04" lengthAdjust="spacingAndGlyphs">Learn More</text>
<text x="1364.96" y="597.00" font-size="18.49" fill="#242424" textLength="60.08" lengthAdjust="spacingAndGlyphs">Dismiss</text>
<text x="1481.63" y="594.80" font-size="19.06" fill="#242424" textLength="45.40" lengthAdjust="spacingAndGlyphs">3 of 3</text>
<text x="1204.67" y="881.30" font-size="22.04" fill="#a8a8a8" textLength="240.19" lengthAdjust="spacingAndGlyphs" stroke="#ffffff" stroke-width="0.45">Type what you want to do</text>
<text x="1179.43" y="998.70" font-size="16.64" fill="#666666" textLength="426.09" lengthAdjust="spacingAndGlyphs">Content is generated by AI and might contain inaccuracies</text>
<text x="1179.68" y="1019.70" font-size="16.64" fill="#666666" textLength="366.71" lengthAdjust="spacingAndGlyphs">or sensitive material. Be sure to verify information.</text>
<text x="1179.82" y="1050.80" font-size="18.20" fill="#3a62b5" textLength="38.95" lengthAdjust="spacingAndGlyphs">Help</text>
<text x="11.44" y="1109.90" font-size="16.36" fill="#f0f0f0" textLength="75.86" lengthAdjust="spacingAndGlyphs">Page 1 of 1</text>
<text x="116.50" y="1109.90" font-size="16.36" fill="#f0f0f0" textLength="56.51" lengthAdjust="spacingAndGlyphs">0 words</text>
<text x="199.50" y="1109.90" font-size="16.36" fill="#f0f0f0" textLength="156.59" lengthAdjust="spacingAndGlyphs">English (United States)</text>
<text x="381.27" y="1109.90" font-size="16.36" fill="#f0f0f0" textLength="134.58" lengthAdjust="spacingAndGlyphs">Text Predictions: On</text>
<text x="570.30" y="1109.90" font-size="16.36" fill="#f0f0f0" textLength="169.03" lengthAdjust="spacingAndGlyphs">Accessibility: Good to go</text>
<text x="1144.73" y="1109.90" font-size="16.36" fill="#f0f0f0" textLength="40.74" lengthAdjust="spacingAndGlyphs">Focus</text>
<text x="1595.01" y="1109.90" font-size="16.36" fill="#f0f0f0" textLength="40.46" lengthAdjust="spacingAndGlyphs">100%</text>
</svg>
</body></html>
